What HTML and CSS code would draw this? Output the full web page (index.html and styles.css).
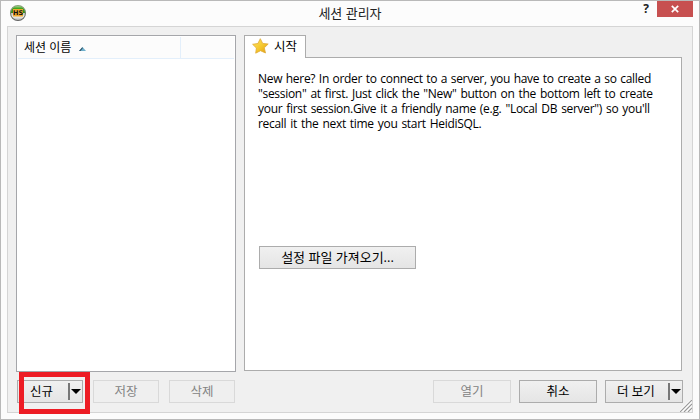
FILE: index.html
```html
<!DOCTYPE html>
<html lang="ko">
<head>
<meta charset="utf-8">
<title>세션 관리자</title>
<link rel="stylesheet" href="styles.css">
</head>
<body>
<div class="window">
  <header class="titlebar">
    <svg class="logo" width="18" height="18" viewBox="0 0 18 18">
      <defs>
        <linearGradient id="rim" x1="0" y1="0" x2="0" y2="1"><stop offset="0" stop-color="#88a477"/><stop offset="1" stop-color="#626262"/></linearGradient>
        <linearGradient id="ball" x1="0" y1="0" x2="0" y2="1"><stop offset="0" stop-color="#b3dfa2"/><stop offset=".2" stop-color="#40a51c"/><stop offset=".48" stop-color="#348c16"/><stop offset=".5" stop-color="#c8c8c4"/><stop offset=".75" stop-color="#eeeeec"/><stop offset="1" stop-color="#aaa"/></linearGradient>
      </defs>
      <circle cx="9" cy="9" r="7.5" fill="url(#ball)" stroke="url(#rim)" stroke-width="1.1"/>
      <rect x="4" y="5" width="10" height="7.5" fill="#efa72d"/>
      <text x="9" y="11.2" text-anchor="middle" class="logo-text">HS</text>
    </svg>
    <h1 class="title">세션 관리자</h1>
    <div class="controls">
      <span class="help">?</span>
      <span class="close"><svg width="8" height="8" viewBox="0 0 8 8"><path d="M.8.8 7.2 7.2M7.2.8.8 7.2" stroke="#fff" stroke-width="1.7"/></svg></span>
    </div>
  </header>
  <main class="client">
    <section class="list">
      <div class="list-head">
        <div class="col name"><span>세션 이름</span><svg width="7" height="4" viewBox="0 0 7 4"><path d="M0 4 3.5 0 7 4Z" fill="#6fb0cc"/><path d="M0 4 3.5 0V1.4L1.5 4Z" fill="#2c4e62"/></svg></div>
        <div class="col"></div>
      </div>
    </section>
    <section class="tabs">
      <div class="tab">
        <svg width="17" height="16" viewBox="0 0 17 16"><defs><linearGradient id="gold" x1="0" y1="0" x2="1" y2="1"><stop offset="0" stop-color="#ffe766"/><stop offset=".55" stop-color="#f5c72c"/><stop offset="1" stop-color="#dd9a16"/></linearGradient></defs><path d="M8.3.7 10.7 5.4 16.2 6 12.3 9.8 13.5 15 8.5 12.7 3.7 15.2 4.4 10 .6 6.3 5.9 5.5Z" fill="url(#gold)" stroke="#dfaa35" stroke-width=".8" stroke-linejoin="round"/></svg>
        <span>시작</span>
      </div>
      <div class="panel">
        <p class="intro"><span class="l1">New here? In order to connect to a server, you have to create a so called</span><span class="l2">"session" at first. Just click the "New" button on the bottom left to create</span><span class="l3">your first session.Give it a friendly name (e.g. "Local DB server") so you'll</span><span class="l4">recall it the next time you start HeidiSQL.</span></p>
        <button class="btn import">설정 파일 가져오기...</button>
      </div>
    </section>
    <footer class="actions">
      <button class="btn small split">신규<i class="drop"></i></button>
      <button class="btn small off">저장</button>
      <button class="btn small off">삭제</button>
      <button class="btn off push">열기</button>
      <button class="btn">취소</button>
      <button class="btn split">더 보기<i class="drop"></i></button>
    </footer>
    <svg class="grip" width="12" height="12" viewBox="0 0 12 12"><path d="M0 12 12 0M4 12 12 4M8 12 12 8" stroke="#fff" stroke-width="2.8"/><path d="M0 12 12 0M4 12 12 4M8 12 12 8" stroke="#999" stroke-width="1.2"/></svg>
  </main>
  <div class="highlight"></div>
</div>
</body>
</html>
```
FILE: styles.css
```css
* { box-sizing: border-box; }
body { margin: 0; }
.window {
  position: relative;
  width: 700px;
  height: 420px;
  padding: 0 6px 6px;
  border: 1px solid #b9b9b9;
  background: #fcfcfc;
  color: #000;
  font: 12px/15px "Open Sans", "Noto Sans CJK KR", sans-serif;
}
.titlebar { display: grid; grid-template-columns: 90px 1fr 90px; height: 25px; }
.logo { margin: 3px 0 0 2px; }
.logo-text { font: bold 6.5px "DejaVu Sans", sans-serif; fill: #111; }
.title { margin: 4px 0 0; font-size: 13px; line-height: 17px; font-weight: 400; text-align: center; color: #222; }
.controls { display: flex; justify-content: flex-end; }
.help { margin-right: 8px; font: bold 12px/16px "Open Sans", sans-serif; color: #222; }
.close { display: flex; align-items: center; justify-content: center; width: 36px; height: 16px; background: #c75050; }
.client {
  position: relative;
  display: grid;
  grid-template: 337px 23px / 220px 438px;
  gap: 8px;
  width: 686px;
  height: 387px;
  padding: 8px;
  border: 1px solid #d5d5d5;
  background: #f0f0f0;
}
.list { border: 1px solid #a5a6aa; background: #fff; padding: 1px; }
.list-head { display: flex; height: 22px; background: #fcfcfc; border-bottom: 1px solid #e3effb; }
.col.name { display: flex; align-items: center; gap: 8px; width: 163px; padding-left: 6px; border-right: 1px solid #e3effb; }
.col.name svg { margin-top: 2px; }
.tabs { display: flex; flex-direction: column; height: 336px; }
.tab { position: relative; display: flex; align-items: center; gap: 5px; width: 62px; height: 23px; margin-bottom: -1px; padding: 0 0 2px 7px; border: 1px solid #acacac; border-bottom: 0; background: #fff; }
.tab span { font-size: 12.5px; }
.panel { flex: 1; padding: 13px; border: 1px solid #acacac; background: #fff; }
.intro { margin: 0; height: 175px; letter-spacing: -.3px; }
.intro span { display: block; white-space: nowrap; width: max-content; }
.l1 { word-spacing: .8px; }
.l2 { word-spacing: 1.2px; }
.l3 { word-spacing: 1.15px; }
.l4 { word-spacing: 1.15px; }
.btn { flex: none; width: 78px; height: 23px; padding: 0; border: 1px solid #acacac; background: linear-gradient(#f0f0f0, #e5e5e5); color: #000; font: inherit; font-size: 12.5px; text-align: center; }
.btn.import { display: block; width: 157px; margin-left: 1px; font-size: 13px; }
.actions { grid-column: 1 / 3; display: flex; gap: 8px; margin: 0 -1px 0 1px; }
.btn.small { width: 66px; margin-right: 2px; }
.btn.off { border-color: #d9d9d9; background: #efefef; color: #838383; }
.push { margin-left: auto; }
.btn.split { display: flex; align-items: center; justify-content: space-between; padding: 0 1px 0 11px; }
.btn.small.split { padding-left: 12px; }
.drop { width: 13px; height: 17px; border-left: 2px solid #777; display: flex; align-items: center; justify-content: center; }
.drop::after { content: ""; border: 5px solid transparent; border-top: 5px solid #000; border-bottom: 0; }
.grip { position: absolute; right: 0; bottom: 0; }
.highlight { position: absolute; left: 18px; top: 371px; width: 71px; height: 42px; border: 5px solid #ed1c24; }
```
